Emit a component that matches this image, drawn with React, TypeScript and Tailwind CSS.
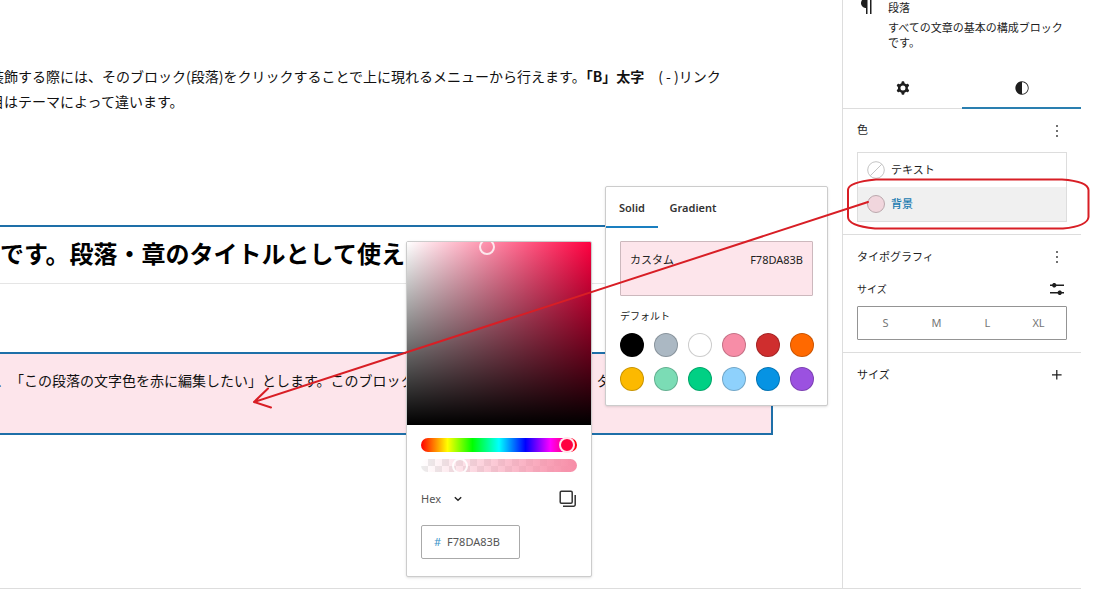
import React from "react";

const PALETTE = [
  { name: "黒", className: "bg-black" },
  { name: "グレー", className: "bg-[#abb8c3]" },
  { name: "白", className: "bg-white" },
  { name: "ピンク", className: "bg-[#f78da7]" },
  { name: "赤", className: "bg-[#cf2e2e]" },
  { name: "オレンジ", className: "bg-[#ff6900]" },
  { name: "黄", className: "bg-[#fcb900]" },
  { name: "薄緑", className: "bg-[#7bdcb5]" },
  { name: "緑", className: "bg-[#00d084]" },
  { name: "水色", className: "bg-[#8ed1fc]" },
  { name: "青", className: "bg-[#0693e3]" },
  { name: "紫", className: "bg-[#9b51e0]" },
];

const SIZES = ["S", "M", "L", "XL"];

function Icon({ d, className = "size-5" }: { d: string; className?: string }) {
  return (
    <svg viewBox="0 0 24 24" fill="currentColor" className={className} aria-hidden="true">
      <path fillRule="evenodd" clipRule="evenodd" d={d} />
    </svg>
  );
}

const PARAGRAPH =
  "m9.99609 14v-.2251l.00391.0001v6.225h1.5v-14.5h2.5v14.5h1.5v-14.5h3v-1.5h-8.50391c-2.76142 0-5 2.23858-5 5 0 2.7614 2.23858 5 5 5z";
const COG =
  "M10.289 4.836A1 1 0 0111.275 4h1.306a1 1 0 01.987.836l.244 1.466c.787.26 1.503.679 2.108 1.218l1.393-.522a1 1 0 011.216.437l.653 1.13a1 1 0 01-.23 1.273l-1.148.944a6.025 6.025 0 010 2.435l1.149.946a1 1 0 01.23 1.272l-.653 1.13a1 1 0 01-1.216.437l-1.394-.522c-.605.54-1.32.958-2.108 1.218l-.244 1.466a1 1 0 01-.987.836h-1.306a1 1 0 01-.986-.836l-.244-1.466a5.995 5.995 0 01-2.108-1.218l-1.394.522a1 1 0 01-1.217-.436l-.653-1.131a1 1 0 01.23-1.272l1.149-.946a6.026 6.026 0 010-2.435l-1.148-.944a1 1 0 01-.23-1.272l.653-1.131a1 1 0 011.217-.437l1.393.522a5.994 5.994 0 012.108-1.218l.244-1.466zM14.929 12a3 3 0 11-6 0 3 3 0 016 0z";
const STYLES =
  "M12 4c-4.4 0-8 3.6-8 8s3.6 8 8 8 8-3.6 8-8-3.6-8-8-8zm0 15V5c3.9 0 7 3.1 7 7s-3.1 7-7 7z";
const MORE = "M13 19h-2v-2h2v2zm0-6h-2v-2h2v2zm0-6h-2V5h2v2z";
const PLUS = "M11 12.5V17.5H12.5V12.5H17.5V11H12.5V6H11V11H6V12.5H11Z";
const SLIDERS =
  "m19 7.5h-7.628c-.3089-.87389-1.1423-1.5-2.122-1.5-.97966 0-1.81309.62611-2.12197 1.5h-2.12803v1.5h2.12803c.30888.87389 1.14231 1.5 2.12197 1.5.9797 0 1.8131-.62611 2.122-1.5h7.628z m0 7.5h-2.128c-.3089-.8739-1.1423-1.5-2.122-1.5s-1.8131.6261-2.122 1.5h-7.628v1.5h7.628c.3089.8739 1.1423 1.5 2.122 1.5s1.8131-.6261 2.122-1.5h2.128z";

function Content() {
  return (
    <div className="overflow-hidden pt-[64px] text-[#111]">
      <p className="-ml-[10px] h-[161px] text-[14px] leading-[25px] whitespace-nowrap">
        装飾する際には、そのブロック(段落)をクリックすることで上に現れるメニューから行えます。<b>「B」太字</b>　( - )リンク
        <br />
        目はテーマによって違います。
      </p>
      <h2 className="mr-[69px] h-[59px] overflow-hidden border-t-2 border-b border-t-[#1e6fa8] border-b-[#e5e5e5] text-[24px] leading-[52px] font-bold whitespace-nowrap text-black">
        です。段落・章のタイトルとして使えます
      </h2>
      <div className="mt-[68px] mr-[69px] h-[83px] overflow-hidden border-y-2 border-r-2 border-[#1e6fa8] bg-[#fde5eb] pt-[14px] text-[14px] leading-[25px] whitespace-nowrap">
        <p className="-ml-[4px] [text-spacing-trim:space-all]">
          、「この段落の文字色を赤に編集したい」とします。このブロックにカーソルを合わせて選び、タブ
        </p>
      </div>
    </div>
  );
}

const THUMB =
  "block w-full appearance-none rounded-full [&::-webkit-slider-thumb]:size-4 [&::-webkit-slider-thumb]:appearance-none [&::-webkit-slider-thumb]:rounded-full [&::-webkit-slider-thumb]:border-2 [&::-webkit-slider-thumb]:border-white/90";

function ColorPicker() {
  return (
    <section
      aria-label="カラーピッカー"
      className="absolute top-[241px] left-[406px] w-[186px] overflow-hidden rounded-[2px] border border-[#ccc] bg-white shadow-sm"
    >
      <div className="relative h-[183px] overflow-hidden bg-[linear-gradient(to_top,#000,transparent),linear-gradient(to_right,#fff,#ff0040)]">
        <span className="absolute -top-[3px] left-[72px] size-4 rounded-full border-2 border-white/80" />
      </div>
      <div className="px-[14px] pt-[13px] pb-[17px]">
        <input
          type="range"
          aria-label="色相"
          min={0}
          max={360}
          defaultValue={355}
          className={`${THUMB} h-[14px] bg-[linear-gradient(to_right,#f00,#ff0_17%,#0f0_33%,#0ff_50%,#00f_67%,#f0f_83%,#f00)] [&::-webkit-slider-thumb]:bg-[#ff0040]`}
        />
        <input
          type="range"
          aria-label="不透明度"
          min={0}
          max={100}
          defaultValue={22}
          className={`${THUMB} mt-[7px] h-[13px] bg-[linear-gradient(to_right,#f78da700,#f78da7),repeating-conic-gradient(#ececec_0_25%,#fff_0_50%)] bg-[size:100%_100%,14px_14px]`}
        />
        <div className="mt-[17px] flex h-[20px] items-center justify-between">
          <label className="relative flex items-center text-[#555]">
            <select
              aria-label="形式"
              className="w-[44px] appearance-none bg-transparent text-[11px] leading-[20px]"
              defaultValue="Hex"
            >
              <option>Hex</option>
              <option>RGB</option>
              <option>HSL</option>
            </select>
            <svg viewBox="0 0 8 6" fill="none" stroke="#222" strokeWidth="1.4" className="absolute left-[33px] h-[6px] w-[8px]">
              <path d="M.8 1.2 4 4.2 7.2 1.2" />
            </svg>
          </label>
          <button aria-label="コピー" className="text-[#333]">
            <svg viewBox="0 0 18 18" fill="none" stroke="currentColor" strokeWidth="1.5" className="size-[18px]">
              <rect x="1.2" y="1.2" width="12" height="12" rx="1.2" />
              <path d="M16.2 5v9.7a1.5 1.5 0 0 1-1.5 1.5H4" />
            </svg>
          </button>
        </div>
        <label className="mt-[16px] flex h-[34px] w-[99px] items-center gap-[6px] rounded-[2px] border border-[#aaa] pl-[12px] text-[11px]">
          <span className="text-[#3a94c9]">#</span>
          <input aria-label="16進数カラー" defaultValue="F78DA83B" className="w-full min-w-0 bg-transparent text-[#555] outline-none" />
        </label>
      </div>
    </section>
  );
}

function PalettePopover() {
  return (
    <section
      aria-label="カラーパレット"
      className="absolute top-[186px] left-[605px] w-[223px] rounded-[2px] border border-[#ccc] bg-white shadow-sm"
    >
      <div role="tablist" className="flex h-[41px] text-[11px] font-semibold text-[#333]">
        <button role="tab" aria-selected="true" className="w-[52px] border-b-2 border-[#1a7fc0] pt-[4px]">
          Solid
        </button>
        <button role="tab" aria-selected="false" className="w-[70px] border-b-2 border-transparent pt-[4px]">
          Gradient
        </button>
      </div>
      <div className="px-[14px] pt-[13px] pb-[14px] text-[#222]">
        <button className="flex h-[55px] w-full items-start justify-between rounded-[1px] border border-[#ccb8bd] bg-[#fde5eb] px-[9px] pt-[8px] text-[11px] leading-[20px]">
          <span>カスタム</span>
          <span>F78DA83B</span>
        </button>
        <h3 className="mt-[10px] text-[10px] leading-[20px]">デフォルト</h3>
        <div className="mt-[7px] grid grid-cols-[repeat(6,24px)] gap-[10px]">
          {PALETTE.map((c) => (
            <button key={c.name} aria-label={c.name} className={`size-6 rounded-full border border-black/20 ${c.className}`} />
          ))}
        </div>
      </div>
    </section>
  );
}

function Sidebar() {
  return (
    <aside className="w-[239px] shrink-0 border-l border-[#ddd] text-[11px] text-[#1e1e1e]">
      <header className="flex h-[68px] gap-[8px] overflow-hidden pr-[13px] pl-[13px]">
        <Icon d={PARAGRAPH} className="-mt-[6px] size-6 shrink-0" />
        <div className="leading-[15px]">
          <h2 className="h-[20px]">段落</h2>
          <p>すべての文章の基本の構成ブロック です。</p>
        </div>
      </header>
      <div role="tablist" className="grid h-[41px] grid-cols-2">
        <button role="tab" aria-label="設定" aria-selected="false" className="grid place-items-center border-b border-[#ddd]">
          <Icon d={COG} />
        </button>
        <button role="tab" aria-label="スタイル" aria-selected="true" className="grid place-items-center border-b-2 border-[#2a7fb0]">
          <Icon d={STYLES} />
        </button>
      </div>
      <section className="h-[126px] border-b border-[#ddd] px-[14px]">
        <div className="flex h-[43px] items-center justify-between">
          <h3>色</h3>
          <button aria-label="色のオプション">
            <Icon d={MORE} />
          </button>
        </div>
        <div className="border border-[#ddd]">
          <button className="flex h-[34px] w-full items-center gap-[6px] px-[9px]">
            <svg viewBox="0 0 18 18" fill="none" stroke="#c4c4c4" className="size-[18px]">
              <circle cx="9" cy="9" r="8.3" />
              <path d="M3.2 14.8 14.8 3.2" />
            </svg>
            テキスト
          </button>
          <button className="flex h-[34px] w-full items-center gap-[6px] bg-[#f0f0f0] px-[9px] font-medium text-[#1a7bb0]">
            <span className="size-[18px] rounded-full border border-[#bba8ad] bg-[#f1d6dd]" />
            背景
          </button>
        </div>
      </section>
      <section className="h-[118px] border-b border-[#ddd] px-[14px]">
        <div className="flex h-[44px] items-center justify-between">
          <h3>タイポグラフィ</h3>
          <button aria-label="タイポグラフィのオプション">
            <Icon d={MORE} />
          </button>
        </div>
        <div className="flex h-[20px] items-center justify-between text-[10px]">
          <h4>サイズ</h4>
          <button aria-label="カスタムサイズを設定" className="-mr-[2px]">
            <Icon d={SLIDERS} className="size-6" />
          </button>
        </div>
        <div className="mt-[7px] grid h-[34px] grid-cols-4 rounded-[1px] border border-[#949494] px-[2px] text-[#757575]">
          {SIZES.map((s) => (
            <button key={s}>{s}</button>
          ))}
        </div>
      </section>
      <section className="flex h-[44px] items-center justify-between px-[14px]">
        <h3>サイズ</h3>
        <button aria-label="サイズを追加">
          <Icon d={PLUS} />
        </button>
      </section>
    </aside>
  );
}

function Annotation() {
  return (
    <svg
      viewBox="0 0 1100 600"
      fill="none"
      stroke="#d81e25"
      strokeWidth="2"
      strokeLinecap="round"
      strokeLinejoin="round"
      className="pointer-events-none absolute top-0 left-0 h-[600px] w-[1100px]"
      aria-hidden="true"
    >
      <path d="M868 202 254 402M268 388.500 254 402 271 407.500" />
      <path d="M876 179.500H1062C1077 180.500 1088 184 1088.500 190V217C1088 224 1078 227 1063 228.500H875C860 227 848 224 848 217V190C848 184 860 181 876 179.500Z" />
    </svg>
  );
}

export default function App() {
  return (
    <div className="relative flex min-h-screen flex-col overflow-hidden bg-white pb-[11px] font-['Noto_Sans','Noto_Sans_CJK_JP',sans-serif]">
      <div className="mr-[19px] flex flex-1 border-b border-[#ddd]">
        <main className="relative min-w-0 flex-1 font-['Noto_Sans_CJK_JP',sans-serif]">
          <Content />
          <div className="font-['Noto_Sans','Noto_Sans_CJK_JP',sans-serif]">
            <PalettePopover />
            <ColorPicker />
          </div>
        </main>
        <Sidebar />
      </div>
      <Annotation />
    </div>
  );
}
